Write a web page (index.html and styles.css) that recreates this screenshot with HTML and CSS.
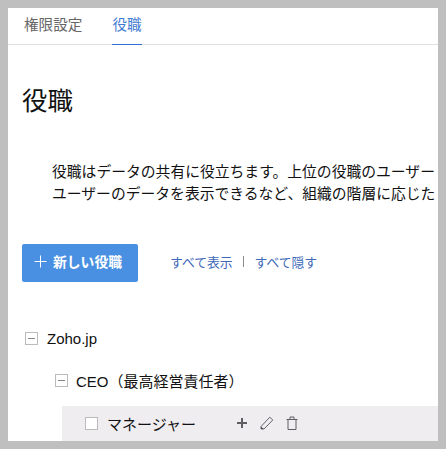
FILE: index.html
```html
<!DOCTYPE html>
<html lang="ja">
  <head>
    <meta charset="UTF-8" />
    <title>役職</title>
    <link rel="stylesheet" href="styles.css">
  </head>
  <body>
    <main class="panel">
      <nav class="tabs">
        <a class="tab">権限設定</a>
        <a class="tab active">役職</a>
      </nav>
      <h1 class="title">役職</h1>
      <div class="intro">
        <p>役職はデータの共有に役立ちます。上位の役職のユーザー</p>
        <p>ユーザーのデータを表示できるなど、組織の階層に応じた</p>
      </div>
      <div class="actions">
        <button class="new-role">
          <svg class="plus-thin" width="13" height="13" viewBox="0 0 13 13"><path d="M6.5 0.5v12M0.5 6.5h12" stroke="#fff" stroke-width="1" fill="none"/></svg>
          新しい役職
        </button>
        <div class="links">
          <a>すべて表示</a>
          <span class="sep"></span>
          <a>すべて隠す</a>
        </div>
      </div>
      <ul class="tree">
        <li class="node root">
          <span class="box"><i></i></span>
          <span>Zoho.jp</span>
        </li>
        <li class="node ceo">
          <span class="box"><i></i></span>
          <span>CEO（最高経営責任者）</span>
        </li>
        <li class="node manager">
          <span class="box empty"></span>
          <span class="name">マネージャー</span>
          <span class="tools">
            <svg width="12" height="12" viewBox="0 0 12 12"><path d="M6 1v10M1 6h10" stroke="#5f5f63" stroke-width="2" fill="none"/></svg>
            <svg width="14" height="14" viewBox="0 0 14 14"><path d="M1 10.5L9.8 1.2l3 2.8L4 13H1z" stroke="#66666a" stroke-width="1" fill="none"/><path d="M1 10.5L3.8 13H1z" fill="#55555a"/></svg>
            <svg width="12" height="14" viewBox="0 0 12 14"><path d="M0.5 3.5h11M4 3.5V1h4v2.5M2 3.5v10h8v-10" stroke="#5f5f63" stroke-width="1" fill="none"/></svg>
          </span>
        </li>
      </ul>
    </main>
  </body>
</html>
```

FILE: styles.css
```css
* {
  box-sizing: border-box;
  margin: 0;
}

html, body {
  height: 100%;
}

body {
  background-color: #bfbfbf;
  padding: 8px;
  overflow: hidden;
  font-family: "Liberation Sans", "Noto Sans CJK JP", sans-serif;
  color: #111;
}

.panel {
  background-color: white;
  height: 433px;
  overflow: hidden;
}

/* tabs */
.tabs {
  display: flex;
  gap: 30px;
  height: 37px;
  padding-left: 16px;
  border-bottom: 1px solid #e0e0e0;
}

.tab {
  font-size: 14.6px;
  line-height: 34px;
  color: #666;
  height: 37px;
}

.tab.active {
  color: #3f7bd0;
  border-bottom: 1px solid #2f6fd6;
}

.title {
  font-size: 25.5px;
  font-weight: normal;
  line-height: 36px;
  margin: 38px 0 0 14px;
}

.intro {
  margin: 42px 0 0 44px;
  font-size: 14.8px;
  line-height: 22px;
  white-space: nowrap;
}

.actions {
  display: flex;
  align-items: center;
  margin: 39px 0 0 14px;
}

.new-role {
  display: flex;
  align-items: center;
  gap: 6px;
  width: 116px;
  height: 38px;
  padding: 0 0 4px 12px;
  border: 0;
  border-radius: 2px;
  background-color: #4a90e2;
  color: white;
  font-family: inherit;
  font-size: 13.8px;
  font-weight: bold;
}

.links {
  display: flex;
  align-items: center;
  margin-left: 32px;
  padding-bottom: 3px;
  font-size: 12.8px;
  color: #3d68b8;
}

.sep {
  width: 1px;
  height: 11px;
  margin: 0 11px 0 10px;
  background-color: #8a8a8a;
}

/* role tree */
.tree {
  list-style-type: none;
  padding: 0;
  margin-top: 38px;
}

.node {
  display: flex;
  align-items: center;
  font-size: 15px;
}

.box {
  display: flex;
  align-items: center;
  justify-content: center;
  width: 13px;
  height: 13px;
  border: 1px solid #bbb;
  background-color: white;
}

.box i {
  width: 7px;
  height: 1px;
  background-color: #888;
}

.root {
  gap: 9px;
  height: 37px;
  padding-left: 17px;
}

.ceo {
  gap: 8px;
  height: 46px;
  padding-left: 47px;
}

.manager {
  gap: 9px;
  height: 35px;
  margin: 3px 0 0 54px;
  padding-left: 23px;
  background-color: #efedf0;
}

.name {
  width: 89px;
}

.tools {
  display: flex;
  align-items: center;
  gap: 12px;
  margin-left: 31px;
  padding-bottom: 2px;
}
```
